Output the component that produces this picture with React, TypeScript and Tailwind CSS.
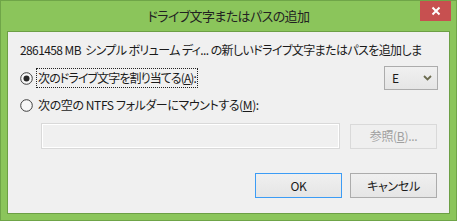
import React from 'react';

const font = "font-['Noto_Sans_CJK_JP',sans-serif] [font-feature-settings:'palt']";

const Radio: React.FC<{ checked?: boolean }> = ({ checked }) => (
  <svg width="13" height="13" viewBox="0 0 13 13" className="shrink-0">
    <circle cx="6.5" cy="6.5" r="5.8" fill="#f7f7f7" stroke="#3d3d3d" strokeWidth="1" />
    {checked && <circle cx="6.5" cy="6.5" r="3" fill="#262626" />}
  </svg>
);

const Button: React.FC<{ children: React.ReactNode; primary?: boolean; disabled?: boolean }> = ({
  children,
  primary,
  disabled,
}) => (
  <button
    className={`h-[25px] w-[87px] border text-[12px] leading-none tracking-[-0.3px] ${
      disabled
        ? 'border-[#d9d9d9] bg-[#efefef] text-[#a0a0a0]'
        : primary
          ? 'border-[#3c9cf5] bg-gradient-to-b from-[#f0f0f0] to-[#e5e5e5] text-[#1a1a1a]'
          : 'border-[#acacac] bg-gradient-to-b from-[#f0f0f0] to-[#e5e5e5] text-[#1a1a1a]'
    }`}
  >
    {children}
  </button>
);

export default function App() {
  return (
    <div className={`w-[457px] h-[221px] flex flex-col border border-[#6fa548] bg-[#8bc55b] ${font}`}>
      {/* title bar */}
      <div className="h-[30px] grid grid-cols-[1fr_auto_1fr] items-start">
        <div />
        <div className="pt-[5px] text-[13px] leading-[20px] tracking-[-0.6px] text-[#222]">ドライブ文字またはパスの追加</div>
        <div className="flex justify-end pr-[5px]">
          <div className="w-[31px] h-[20px] bg-[#c75050] flex items-center justify-center">
            <svg width="10" height="10" viewBox="0 0 10 10">
              <path d="M1.5 1.5 L8.5 8.5 M8.5 1.5 L1.5 8.5" stroke="#fff" strokeWidth="2" />
            </svg>
          </div>
        </div>
      </div>

      {/* client area */}
      <div className="mx-[6px] h-[183px] border border-[#6c9f45] bg-[#f0f0f0] flex flex-col px-[12px] pr-[11px] text-[12px] tracking-[-0.4px] text-[#1a1a1a]">
        <p className="mt-[10px] leading-[16px] tracking-[-0.6px] whitespace-nowrap">
          2861458 MB&nbsp; シンプル ボリューム ディ... の新しいドライブ文字またはパスを追加しま
        </p>

        <div className="mt-[8px] h-[24px] flex items-center justify-between">
          <label className="flex items-center">
            <Radio checked />
            <span className="ml-[3px] px-[1px] leading-[18px] tracking-[-0.9px] border border-dotted border-[#222]">
              次のドライブ文字を割り当てる(<span className="underline">A</span>):
            </span>
          </label>
          <div className="w-[54px] h-[24px] border border-[#acacac] bg-gradient-to-b from-[#f0f0f0] to-[#e5e5e5] flex items-center justify-between pl-[7px] pr-[5px]">
            <span>E</span>
            <svg width="9" height="6" viewBox="0 0 9 6">
              <path d="M1 1 L4.5 4.5 L8 1" stroke="#6b6b50" strokeWidth="1.8" fill="none" />
            </svg>
          </div>
        </div>

        <label className="mt-[5px] h-[20px] flex items-center">
          <Radio />
          <span className="ml-[4px] px-[1px] leading-[18px]">
            次の空の NTFS フォルダーにマウントする(<span className="underline">M</span>):
          </span>
        </label>

        <div className="mt-[8px] flex items-center gap-[10px] pl-[21px]">
          <div className="w-[299px] h-[26px] border border-[#d9d9d9] bg-[#f0f0f0] shadow-[inset_0_0_0_1px_#ffffff]" />
          <Button disabled>
            参照(<span className="underline">B</span>)...
          </Button>
        </div>

        <div className="mt-auto mb-[15px] flex justify-end gap-[8px] pr-[1px]">
          <Button primary>OK</Button>
          <Button>キャンセル</Button>
        </div>
      </div>
    </div>
  );
}
